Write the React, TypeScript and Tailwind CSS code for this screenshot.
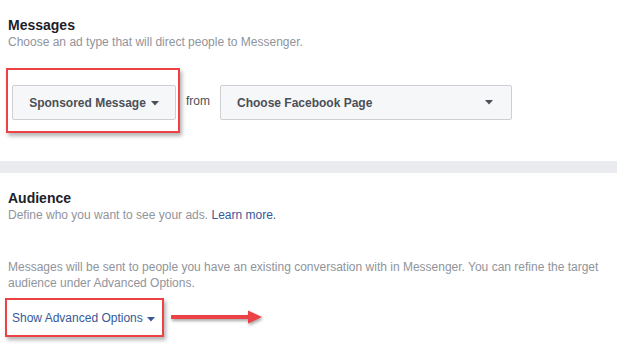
const Caret = ({ className = '' }: { className?: string }) => (
  <svg width="8" height="5" viewBox="0 0 8 5" className={className} aria-hidden>
    <path d="M0 0h8L4 4.5z" fill="currentColor" />
  </svg>
);

const Arrow = () => (
  <svg width="94" height="18" viewBox="0 0 94 18" className="drop-shadow-[1px_2px_1.5px_rgba(0,0,0,0.35)]" aria-hidden>
    <path d="M1 9h79" stroke="#ec4245" strokeWidth="4" strokeLinecap="round" />
    <path d="M77 2.5l14 6.5-14 6.5z" fill="#ec4245" />
  </svg>
);

export default function App() {
  return (
    <div className="w-[617px] h-[355px] bg-white overflow-hidden font-['Liberation_Sans',Arial,sans-serif]">
      {/* Messages */}
      <div className="px-2 pt-4">
        <h2 className="text-[14px] leading-[18px] font-bold text-[#1d2129]">Messages</h2>
        <p className="text-[12px] leading-[16px] text-[#90949c]">Choose an ad type that will direct people to Messenger.</p>

        <div className="mt-[18px] flex items-start">
          <div className="-ml-[2px] border-2 border-[#ec4245] pl-1 pr-[2px] pt-[15px] pb-[11px] shadow-[2px_3px_4px_rgba(0,0,0,0.3)]">
            <button className="w-[164px] h-[35px] flex items-center justify-center gap-[5px] bg-[#f6f7f9] border border-[#ced0d4] rounded-[2px] text-[12px] font-bold text-[#4b4f56]">
              Sponsored Message
              <Caret className="text-[#4b4f56] mt-[1px]" />
            </button>
          </div>
          <span className="ml-[6px] mt-[25px] text-[12px] leading-[16px] text-[#4b4f56]">from</span>
          <button className="ml-[10px] mt-[17px] w-[292px] h-[35px] flex items-center justify-between pl-4 pr-[18px] bg-[#f6f7f9] border border-[#ced0d4] rounded-[2px] text-[12px] font-bold text-[#4b4f56]">
            Choose Facebook Page
            <Caret className="text-[#4b4f56]" />
          </button>
        </div>
      </div>

      {/* divider band */}
      <div className="mt-[28px] h-[12px] bg-[#e9ebee]" />

      {/* Audience */}
      <div className="px-2 pt-4">
        <h2 className="text-[14px] leading-[18px] font-bold text-[#1d2129]">Audience</h2>
        <p className="text-[12px] leading-[16px] text-[#90949c]">
          Define who you want to see your ads. <span className="text-[#365899]">Learn more.</span>
        </p>

        <p className="mt-[36px] text-[12px] leading-[16px] text-[#90949c]">
          Messages will be sent to people you have an existing conversation with in Messenger. You can refine the target audience under Advanced Options.
        </p>

        <div className="mt-[7px] flex items-center">
          <div className="-ml-[3px] border-2 border-[#ec4245] pl-[5px] pr-[7px] pt-[10px] pb-[9px] shadow-[2px_3px_4px_rgba(0,0,0,0.3)]">
            <span className="flex items-center gap-[4px] text-[12px] leading-[16px] text-[#365899]">
              Show Advanced Options
              <Caret className="text-[#365899] mt-[2px]" />
            </span>
          </div>
          <div className="ml-[7px] -mt-[2px]">
            <Arrow />
          </div>
        </div>
      </div>
    </div>
  );
}
